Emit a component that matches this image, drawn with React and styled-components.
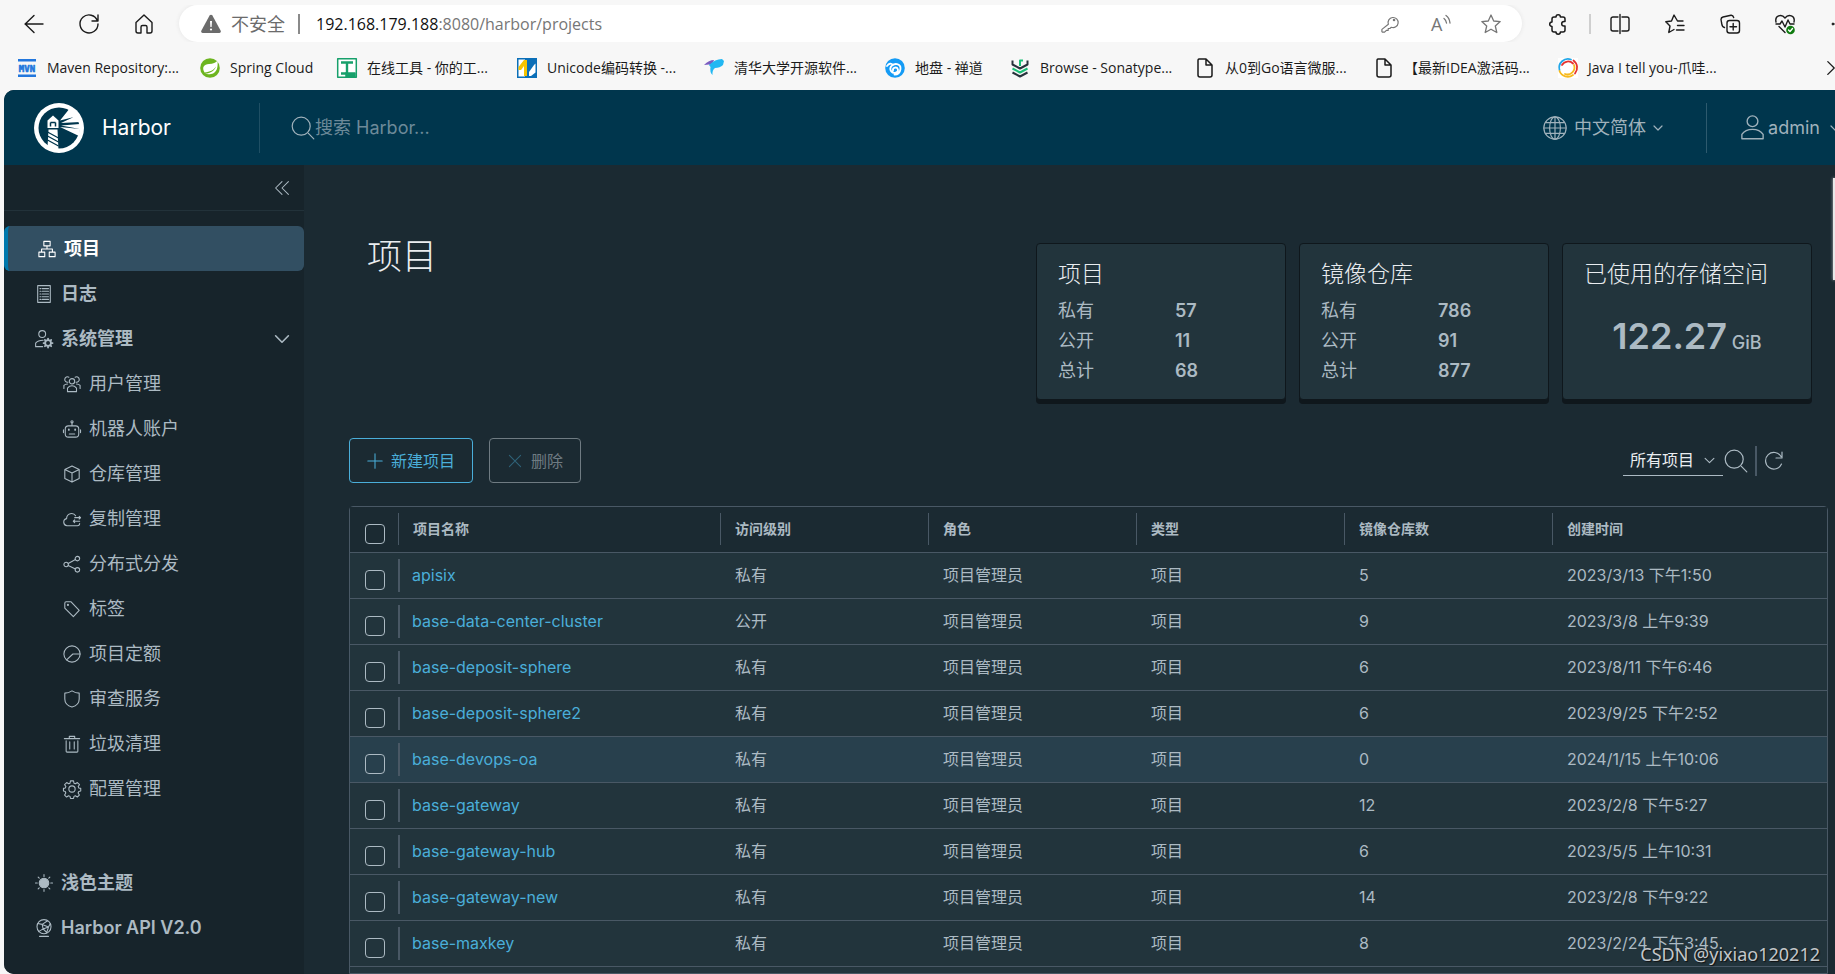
import styled, { createGlobalStyle } from 'styled-components';

const GlobalStyle = createGlobalStyle`
  * {
    box-sizing: border-box;
  }

  body {
    margin: 0;
    background: #f7f7f7;
    font-family: Inter, 'Noto Sans CJK SC', sans-serif;
    line-height: 24px;
  }

  button, input, select {
    font-family: inherit;
    line-height: inherit;
    margin: 0;
  }
`;

/* ---------- shared ---------- */

const Svg = styled.svg`
  display: block;
  flex: none;
  overflow: visible;
  fill: none;
  stroke: currentColor;
  stroke-width: ${({ $stroke }) => $stroke || 1};
  stroke-linecap: round;
  stroke-linejoin: round;
`;

const Icon = ({ name, size = 20, stroke }) => (
  <Svg width={size} height={size} viewBox="0 0 20 20" $stroke={stroke} aria-hidden="true">
    {icons[name]}
  </Svg>
);

const icons = {
  back: <path d="M19 10H1M10 1.5 1.2 10l8.800 8.500" />,
  reload: <path d="M18.500 7A9 9 0 1 0 19 10M19 1v6h-6" />,
  home: <path d="M2 8.500 10 1l8 7.500V17a2 2 0 0 1-2 2h-3v-6a1.500 1.500 0 0 0-1.500-1.500h-3A1.500 1.500 0 0 0 7 13v6H4a2 2 0 0 1-2-2z" />,
  warning: (
    <g stroke="none">
      <path d="M8.600 1.500a1.600 1.600 0 0 1 2.800 0l8.300 15.200a1.600 1.600 0 0 1-1.400 2.300H1.700a1.600 1.600 0 0 1-1.400-2.300z" fill="currentColor" />
      <path d="M9 7h2l-.4 6H9.400z" fill="#fff" />
      <circle cx="10" cy="15.500" r="1.100" fill="#fff" />
    </g>
  ),
  key: (
    <>
      <path d="M8.200 10.300a5.600 5.600 0 1 1 3.300 3.300L9.800 15H8v2H6l-2 2H1.500L1 18.500V16z" />
      <circle cx="14.500" cy="5.500" r=".8" />
    </>
  ),
  readAloud: (
    <>
      <text x="0" y="17" fontSize="18" fill="currentColor" stroke="none">A</text>
      <path d="M13 4.500q2 1.500 2.500 4.500M15 1.500q3.500 2.500 4 7.500" />
    </>
  ),
  star: <path d="m10 1 2.700 6 6.500.600-4.900 4.400 1.500 6.500L10 15.200l-5.800 3.300L5.700 12 .8 7.600l6.500-.6z" />,
  puzzle: <path d="M6 3h2a2.200 2.200 0 0 1 4.400 0H15a2 2 0 0 1 2 2v2.500h-1a2.300 2.300 0 0 0 0 4.600h1V16a2 2 0 0 1-2 2h-2.600a2.200 2.200 0 0 1-4.400 0H6a2 2 0 0 1-2-2v-3.500a2.300 2.300 0 0 1 0-4.600V5a2 2 0 0 1 2-2z" />,
  split: <path d="M8 3H3a2 2 0 0 0-2 2v10a2 2 0 0 0 2 2h5M12 3h5a2 2 0 0 1 2 2v10a2 2 0 0 1-2 2h-5M10 .5v19" />,
  favorites: <path d="M18 7h-5.500L9 1 6.500 7 .8 7.800 5 12l-1.200 6.500L9 15.500M12.500 11.500H19M11.500 16H19" />,
  collections: (
    <>
      <rect x="7" y="6.500" width="12.500" height="12.500" rx="2.500" />
      <path d="M4.500 13.500C2 13 2 11 1.600 9L1 5.500Q1 3.500 3 3l8-1.800q2-.2 2.700 2.300M13.200 9.500v6.500M10 12.800h6.500" />
    </>
  ),
  health: (
    <>
      <path d="M1 8C-.5 1.500 6.500-.5 10 4c3.500-4.500 10.500-2.500 9 4M1 10h4l2-3 3 6 3-7 2 4h4M4 12.500l6 6" />
      <circle cx="15.500" cy="16" r="4.300" fill="#0f7b0f" stroke="none" />
      <path d="m13.500 16 1.500 1.500 2.500-3" stroke="#fff" />
    </>
  ),
  doc: <path d="M4 1h7l6 6v10a2 2 0 0 1-2 2H5a2 2 0 0 1-2-2V2.500A1.500 1.500 0 0 1 4 1zM11 1v6h6" />,
  right: <path d="m6 2 8 8-8 8" />,
  search: (
    <>
      <circle cx="8.500" cy="8.500" r="7.500" />
      <path d="m14.500 14.500 4.500 4.500" />
    </>
  ),
  globe: (
    <>
      <circle cx="10" cy="10" r="9.300" />
      <ellipse cx="10" cy="10" rx="4.500" ry="9.300" />
      <path d="M10 .7v18.600M.7 10h18.600M2.500 5.500h15M2.500 14.500h15" />
    </>
  ),
  user: (
    <>
      <circle cx="10" cy="5" r="4.300" />
      <path d="M1.500 19v-3.500C3.500 12.500 7 11.500 10 11.500s6.500 1 8.500 4V19z" />
    </>
  ),
  down: <path d="m2 6 8 8 8-8" />,
  collapse: <path d="m10 2-8 8 8 8M18 2l-8 8 8 8" />,
  refresh: <path d="M17.500 13A8.300 8.300 0 1 1 17 5.500M18 1v6h-6" />,
  plus: <path d="M10 1v18M1 10h18" />,
  times: <path d="m3 3 14 14M17 3 3 17" />,
  projects: <path d="M6.500 1.500h7v5h-7zM1 13.500h6.500v5H1zM12.500 13.500H19v5h-6.500zM10 6.500V10M4 13v-3h12v3" />,
  logs: <path d="M3 .7h14v18.600H3zM5.500 4h1M8 4h7M5.500 7h1M8 7h7M5.500 10h1M8 10h7M5.500 13h1M8 13h7M5.500 16h1M8 16h7" />,
  admin: (
    <>
      <circle cx="8" cy="4.500" r="3.800" />
      <path d="M8.500 18.500H.7v-4c2-2.500 5-3.200 8.300-3.200" />
      <circle cx="14.500" cy="14.500" r="3.200" strokeWidth="2" />
      <path d="M14.500 9.500v1M14.500 18.500v1M9.500 14.500h1M18.500 14.500h1M11 11l.7.7M17.300 17.300l.7.7M18 11l-.7.700M11 18l.7-.700" strokeWidth="2" />
    </>
  ),
  users: (
    <>
      <circle cx="10" cy="7" r="3" />
      <path d="M5 18.500v-4q2-2.500 5-2.500t5 2.500v4zM5.500 8a3 3 0 1 1 1-5.500M14.500 8a3 3 0 1 0-1-5.500M1 15v-3.500Q2.500 10 5 10M19 15v-3.500Q17.500 10 15 10" />
    </>
  ),
  robot: (
    <>
      <rect x="2.500" y="6.500" width="15" height="12.500" rx="3.500" />
      <path d="M10 6V3M.5 11v3M19.500 11v3M7 15.500h6" />
      <circle cx="10" cy="2" r="1.200" />
      <path d="M6.500 10.500v.5M13.500 10.500v.5" strokeWidth="2" />
    </>
  ),
  box: <path d="m10 1 8 4v10l-8 4-8-4V5zM2 5l8 4 8-4M10 9v10" />,
  cloud: <path d="M18.500 15a2.500 2.500 0 0 1-2.500 2.500H4.500a4 4 0 0 1-.5-7.900C4 3.500 11.500 2 14 6.500M13 8.500h6.500M18 7l1.500 1.500L18 10M18.500 12.500h-7M13 11l-1.500 1.500L13 14" />,
  share: (
    <>
      <circle cx="3.500" cy="10.500" r="2.500" />
      <circle cx="16" cy="4" r="2.500" />
      <circle cx="16" cy="16.500" r="2.500" />
      <path d="m5.800 9.400 8-4.300M5.800 11.600l8 3.900" />
    </>
  ),
  tag: (
    <>
      <path d="M2 3.500A1.500 1.500 0 0 1 3.500 2H9l9 9.500-6.500 7L2 9z" />
      <circle cx="5.500" cy="5.500" r=".6" />
    </>
  ),
  quota: (
    <>
      <circle cx="10" cy="10" r="9" />
      <path d="M19 10h-8l-7 6.500" />
    </>
  ),
  shield: <path d="M10 1q4 2.500 8 2.500V10c0 5-4.500 8-8 9-3.500-1-8-4-8-9V3.500Q6 3.500 10 1z" />,
  trash: <path d="M1.500 4h17M7 4V1.500h6V4M3.500 6.500V18q0 1 1 1h11q1 0 1-1V6.500M7.500 7.500v8M12.500 7.500v8" />,
  cog: (
    <>
      <circle cx="10" cy="10" r="3.500" />
      <path d="m8.300 1h3.400l.5 2.500 1.600.7 2.200-1.400 2.300 2.300-1.400 2.200.7 1.500 2.100.5v2.900l-2.200.6-.7 1.600 1.400 2.300-2.300 2.200-2.200-1.400-1.500.7-.5 2.300H8.300l-.5-2.300-1.600-.7-2.200 1.400-2.200-2.200 1.300-2.300-.6-1.600L.5 12.200V9.300l2-.5.7-1.500-1.400-2.200 2.300-2.300 2.200 1.400 1.500-.7z" />
    </>
  ),
  sun: (
    <>
      <circle cx="10" cy="10" r="5.300" fill="currentColor" />
      <path d="M10 .7v2M10 17.300v2M.5 10h2M17.500 10h2M3.500 3.500l1.200 1.200M15.300 15.300l1.200 1.200M16.500 3.500l-1.200 1.200M4.700 15.300l-1.200 1.200" />
    </>
  ),
  api: (
    <>
      <circle cx="10" cy="8.500" r="7.800" />
      <path d="M5 19.300h10M3 5l5 1 6-4M8 6l1 5-5 3M9 11l6-2 2-4M15 9l-2 6-4-4M8 6l7 3" />
    </>
  ),
};

/* ---------- browser chrome ---------- */

const Shell = styled.div`
  display: flex;
  flex-direction: column;
  height: 100vh;
  overflow: hidden;
`;

const Chrome = styled.div`
  flex: none;
  height: 90px;
  padding-top: 5px;
  color: #1b1b1b;
  font-family: 'Open Sans', 'Noto Sans CJK SC', sans-serif;
`;

const ToolBar = styled.div`
  display: flex;
  align-items: center;
  height: 37px;
  padding-left: 24px;
  overflow: hidden;
`;

const ToolButton = styled.button`
  flex: none;
  width: 20px;
  padding: 0;
  border: 0;
  background: none;
  color: ${({ $muted }) => ($muted ? '#767676' : '#1b1b1b')};
`;

const NavButtons = styled.div`
  display: flex;
  gap: 35px;
`;

const AddressBar = styled.div`
  flex: 1;
  display: flex;
  align-items: center;
  height: 37px;
  margin-left: 25px;
  padding: 0 21px 0 22px;
  border-radius: 19px;
  background: #fff;
  box-shadow: 0 0 4px #e4e4e4;
  color: #6b6b6b;
  font-size: 16px;
`;

const Security = styled.span`
  margin-left: 10px;
  padding-right: 13px;
  border-right: 2px solid #8a8a8a;
  font-size: 18px;
  line-height: 20px;
`;

const Url = styled.span`
  flex: 1;
  margin-left: 16px;
  color: #767676;

  & > b {
    color: #111;
    font-weight: 400;
  }
`;

const AddressTools = styled.div`
  display: flex;
  gap: 30px;
`;

const Extensions = styled.div`
  display: flex;
  align-items: center;
  gap: 35px;
  margin: 0 -15px 0 26px;
`;

const ExtensionStart = styled.div`
  display: flex;
  align-items: center;
  gap: 21px;
  margin-right: -16px;

  &::after {
    content: '';
    width: 2px;
    height: 20px;
    background: #cfcfcf;
  }
`;

const BookmarkBar = styled.nav`
  display: flex;
  align-items: center;
  height: 52px;
  padding-left: 17px;
  overflow: hidden;
`;

const Bookmark = styled.a`
  flex: none;
  display: flex;
  align-items: center;
  gap: 10px;
  width: ${({ $width }) => $width}px;
  color: #1b1b1b;
  font-size: 14px;
  white-space: nowrap;
  text-decoration: none;
`;

const MoreBookmarks = styled(ToolButton)`
  margin: 0 -8px 0 auto;
`;

const favicons = {
  mvn: (
    <g stroke="none" fill="#2277dd">
      <path d="M1 1h18v2.500H1zM1 16.500h18V19H1z" />
      <text x="10" y="14" fontSize="9" fontWeight="700" textAnchor="middle" fontFamily="DejaVu Sans Mono" stroke="#2277dd" strokeWidth=".6">MVN</text>
    </g>
  ),
  spring: (
    <g stroke="none">
      <circle cx="10" cy="10" r="9.800" fill="#6db51f" />
      <path d="M17.500 2.500c.5 6 0 12.500-6.500 13.500-2 .3-4 .3-6-.2 6-.6 9.500-3 11-7.300-2.500 4-6 5.200-11.500 6C1.500 9 4 6.500 9 6c4-.4 7-1 8.500-3.500z" fill="#fff" />
    </g>
  ),
  tool: (
    <g stroke="#17a06b">
      <path d="M.7.700h18.600v18.600H.7z" fill="#fff" />
      <path d="M4 4.500h12M10 4.500v11M4 15.500h6" strokeWidth="2.400" strokeLinecap="butt" />
      <path d="M9 15h9v4H9z" fill="#17a06b" />
    </g>
  ),
  unicode: (
    <g stroke="none">
      <path d="M0 0h20v20H0z" fill="#0b6fb8" />
      <path d="M1.500 1.500H8v17H1.500z" fill="#fff" />
      <path d="M1.500 9 7 2h3v16H7V8l-3 4H1.500z" fill="#f7c400" />
      <path d="m12 14 5-7 1.500-1.500v9L14 18h-2z" fill="#fff" />
    </g>
  ),
  bird: (
    <g stroke="none">
      <path d="M0 7q5-5 10-5-1 4-5 5 3 0 5-1z" fill="#7a5cc0" />
      <path d="M5 7q6-6 13-6l2 2-1 4q-3 3-8 3-3 2-2.500 7-3-3-2-8z" fill="#22b7f2" />
    </g>
  ),
  zentao: (
    <g>
      <circle cx="10" cy="10" r="9.800" fill="#149bf5" stroke="none" />
      <path d="M2 8q3-4 6-1M8 12.500a2.500 2.500 0 1 1 3 2c-4 1.500-7-2.500-5-6 3-4 10-3 9.500 2.500-.5 3.500-3 5.500-6 5.500" stroke="#fff" strokeWidth="1.800" />
    </g>
  ),
  sonatype: (
    <g strokeWidth="2" strokeLinecap="butt">
      <path d="M10 8V2.500h3" stroke="#1bbf78" />
      <path d="M2.500 2.500v4l7.500 4 7.500-4v-4M2.500 14.500l7.500 4 7.500-4" stroke="#28323c" />
      <path d="m2.500 10.500 7.500 4 7.500-4" stroke="#1bbf78" />
    </g>
  ),
  java: (
    <g strokeWidth="1.800">
      <path d="M0 0h20v20H0z" fill="#fff" stroke="none" />
      <path d="M1.500 12A8.800 8.800 0 0 1 13 1.500" stroke="#22a7e8" />
      <path d="M4 7a7 7 0 0 1 11-1.500M15.500 2.500a9 9 0 0 1 1.500 13" stroke="#e5322d" />
      <path d="M15 17A8.800 8.800 0 0 1 1.500 13M16 7a7 7 0 0 1-9 9" stroke="#f7b91c" />
    </g>
  ),
  doc: icons.doc,
};

const bookmarks = [
  { icon: 'mvn', text: 'Maven Repository:...', width: 183 },
  { icon: 'spring', text: 'Spring Cloud', width: 137 },
  { icon: 'tool', text: '在线工具 - 你的工...', width: 180 },
  { icon: 'unicode', text: 'Unicode编码转换 -...', width: 187 },
  { icon: 'bird', text: '清华大学开源软件...', width: 181 },
  { icon: 'zentao', text: '地盘 - 禅道', width: 125 },
  { icon: 'sonatype', text: 'Browse - Sonatype...', width: 185 },
  { icon: 'doc', text: '从0到Go语言微服...', width: 179 },
  { icon: 'doc', text: '【最新IDEA激活码...', width: 184 },
  { icon: 'java', text: 'Java I tell you-爪哇...', width: 180 },
];

const BrowserChrome = () => (
  <Chrome>
    <ToolBar>
      <NavButtons>
        <ToolButton aria-label="后退"><Icon name="back" stroke={1.4} /></ToolButton>
        <ToolButton aria-label="刷新"><Icon name="reload" stroke={1.4} /></ToolButton>
        <ToolButton aria-label="主页"><Icon name="home" stroke={1.4} /></ToolButton>
      </NavButtons>
      <AddressBar>
        <Icon name="warning" />
        <Security>不安全</Security>
        <Url><b>192.168.179.188</b>:8080/harbor/projects</Url>
        <AddressTools>
          <ToolButton $muted aria-label="密码"><Icon name="key" size={18} stroke={1.3} /></ToolButton>
          <ToolButton $muted aria-label="大声朗读"><Icon name="readAloud" stroke={1.3} /></ToolButton>
          <ToolButton $muted aria-label="收藏"><Icon name="star" stroke={1.3} /></ToolButton>
        </AddressTools>
      </AddressBar>
      <Extensions>
        <ExtensionStart>
          <ToolButton aria-label="扩展"><Icon name="puzzle" stroke={1.5} /></ToolButton>
        </ExtensionStart>
        <ToolButton aria-label="分屏"><Icon name="split" stroke={1.4} /></ToolButton>
        <ToolButton aria-label="收藏夹"><Icon name="favorites" stroke={1.4} /></ToolButton>
        <ToolButton aria-label="集锦"><Icon name="collections" stroke={1.4} /></ToolButton>
        <ToolButton aria-label="浏览器概要"><Icon name="health" stroke={1.4} /></ToolButton>
        <ToolButton aria-label="更多">
          <Svg width="20" height="20" viewBox="0 0 20 20">
            <circle cx="3" cy="10" r="1" fill="currentColor" />
            <circle cx="10" cy="10" r="1" fill="currentColor" />
          </Svg>
        </ToolButton>
      </Extensions>
    </ToolBar>
    <BookmarkBar>
      {bookmarks.map(({ icon, text, width }) => (
        <Bookmark key={text} href="#" $width={width}>
          <Svg width="20" height="20" viewBox="0 0 20 20" $stroke={1.5}>{favicons[icon]}</Svg>
          {text}
        </Bookmark>
      ))}
      <MoreBookmarks aria-label="更多书签"><Icon name="right" size={16} stroke={1.6} /></MoreBookmarks>
    </BookmarkBar>
  </Chrome>
);

/* ---------- harbor header ---------- */

const Portal = styled.div`
  flex: 1;
  min-height: 0;
  display: flex;
  flex-direction: column;
  margin-left: 4px;
  border-radius: 10px 0 0 10px;
  overflow: hidden;
  background: #1b2a32;
  color: #acbac3;
`;

const Header = styled.header`
  flex: none;
  display: flex;
  align-items: center;
  height: 75px;
  background: #00364d;
  overflow: hidden;
`;

const Brand = styled.a`
  display: flex;
  align-items: center;
  gap: 18px;
  width: 255px;
  padding-left: 30px;
  color: #fff;
  font-size: 21px;
  text-decoration: none;
`;

const Search = styled.label`
  flex: 1;
  display: flex;
  align-items: center;
  height: 50px;
  padding-left: 31px;
  border-left: 1px solid #1f4f64;
  color: #9fb1bb;
`;

const SearchInput = styled.input`
  flex: 1;
  padding: 0;
  border: 0;
  outline: 0;
  background: none;
  color: #fff;
  font-size: 18px;

  &::placeholder {
    color: #6d8a99;
  }
`;

const HeaderMenu = styled.button`
  flex: none;
  display: flex;
  align-items: center;
  height: 50px;
  padding: 0;
  border: 0;
  background: none;
  color: #9fb1bb;
  font-size: 18px;

  & > span {
    margin: ${({ $user }) => ($user ? '0 10px 0 3px' : '0 7px')};
  }
`;

const UserArea = styled.div`
  flex: none;
  margin: 0 -5px 0 43px;
  padding-left: 33px;
  border-left: 1px solid #2d5a6e;
`;

const Logo = () => (
  <svg width="50" height="50" viewBox="0 0 50 50" aria-hidden="true">
    <circle cx="25" cy="25" r="25" fill="#fff" />
    <circle cx="25" cy="25" r="20.500" fill="#00364d" />
    <path d="M26 17.500 36 5l8 8zM27 20l16-7.500 3 6.500zM27 22.500l19-1.500v5zM26 24l20 2-1 7z" fill="#fff" />
    <path d="m19 12.500 5.500 5v7.500h-11v-7.500z" fill="#fff" />
    <path d="M16.500 19.500v4M21.500 19.500v4M16.500 19.500h5" stroke="#00364d" strokeWidth="1.500" />
    <path d="M14.500 26.500h9l1 21.500-11-3z" fill="#fff" />
    <path d="m13.500 29 11 6M13.500 33l11 6M13.500 37l11 6" stroke="#00364d" strokeWidth="1.300" />
  </svg>
);

const HarborHeader = () => (
  <Header>
    <Brand href="#">
      <Logo />
      Harbor
    </Brand>
    <Search>
      <Icon name="search" size={24} />
      <SearchInput type="text" placeholder="搜索 Harbor..." aria-label="搜索 Harbor" />
    </Search>
    <HeaderMenu>
      <Icon name="globe" size={24} />
      <span>中文简体</span>
      <Icon name="down" size={10} stroke={2.4} />
    </HeaderMenu>
    <UserArea>
      <HeaderMenu $user>
        <Icon name="user" size={25} stroke={1.1} />
        <span>admin</span>
        <Icon name="down" size={10} stroke={2.4} />
      </HeaderMenu>
    </UserArea>
  </Header>
);

/* ---------- side nav ---------- */

const Body = styled.div`
  flex: 1;
  min-height: 0;
  display: flex;
`;

const SideNav = styled.nav`
  flex: none;
  width: 300px;
  background: #17242b;
`;

const Trigger = styled.div`
  display: flex;
  justify-content: flex-end;
  height: 46px;
  margin-bottom: 15px;
  padding: 15px 14px 0 0;
  border-bottom: 1px solid #22323a;
`;

const TriggerButton = styled.button`
  height: 16px;
  padding: 0;
  border: 0;
  background: none;
  color: #acbac3;
`;

const NavLink = styled.a`
  display: flex;
  align-items: center;
  gap: 8px;
  height: 45px;
  padding: 0 14px 0 ${({ $sub, $active }) => ($sub ? 59 : $active ? 30 : 31)}px;
  border-left: ${({ $active }) => ($active ? '4px solid #0079ad' : '0')};
  border-radius: 6px;
  background: ${({ $active }) => ($active ? '#324f62' : 'none')};
  color: ${({ $active }) => ($active ? '#fff' : '#acbac3')};
  font-size: 18px;
  font-weight: ${({ $sub }) => ($sub ? 400 : 600)};
  text-decoration: none;

  & > span {
    flex: 1;
  }
`;

const NavFooter = styled.div`
  margin-top: 49px;
`;

const links = [
  { icon: 'projects', text: '项目', active: true },
  { icon: 'logs', text: '日志' },
  { icon: 'admin', text: '系统管理', open: true },
  { icon: 'users', text: '用户管理', sub: true },
  { icon: 'robot', text: '机器人账户', sub: true },
  { icon: 'box', text: '仓库管理', sub: true },
  { icon: 'cloud', text: '复制管理', sub: true },
  { icon: 'share', text: '分布式分发', sub: true },
  { icon: 'tag', text: '标签', sub: true },
  { icon: 'quota', text: '项目定额', sub: true },
  { icon: 'shield', text: '审查服务', sub: true },
  { icon: 'trash', text: '垃圾清理', sub: true },
  { icon: 'cog', text: '配置管理', sub: true },
];

const Sidebar = () => (
  <SideNav>
    <Trigger>
      <TriggerButton aria-label="收起"><Icon name="collapse" size={16} stroke={1.3} /></TriggerButton>
    </Trigger>
    {links.map(({ icon, text, active, open, sub }) => (
      <NavLink key={text} href="#" $active={active} $sub={sub}>
        <Icon name={icon} size={18} stroke={1.2} />
        <span>{text}</span>
        {open && <Icon name="down" size={16} stroke={2} />}
      </NavLink>
    ))}
    <NavFooter>
      <NavLink href="#">
        <Icon name="sun" size={18} stroke={1.2} />
        <span>浅色主题</span>
      </NavLink>
      <NavLink href="#">
        <Icon name="api" size={18} stroke={1.2} />
        <span>Harbor API V2.0</span>
      </NavLink>
    </NavFooter>
  </SideNav>
);

/* ---------- projects page ---------- */

const Main = styled.main`
  position: relative;
  flex: 1;
  min-width: 0;
  display: flex;
  flex-direction: column;
  padding: 78px 7px 0 45px;
  overflow: hidden;
`;

const Overview = styled.div`
  flex: none;
  display: flex;
  gap: 13px;
  margin-right: 16px;
`;

const Title = styled.h1`
  flex: 1;
  margin: -12px 0 0 18px;
  color: #eaedf0;
  font-size: 35px;
  font-weight: 300;
  line-height: 50px;
`;

const Card = styled.section`
  width: 250px;
  margin-bottom: 4px;
  padding: 15px 21px 13px;
  border: 1px solid #0f171c;
  border-radius: 4px;
  background: #22343c;
  box-shadow: 0 4px 0 #0f171c;
`;

const CardTitle = styled.h2`
  margin: 0 0 7px;
  color: #eaedf0;
  font-size: 23px;
  font-weight: 300;
  line-height: 30px;
  white-space: nowrap;
`;

const Stats = styled.dl`
  display: grid;
  grid-template-columns: 117px 1fr;
  margin: 0;
  font-size: 18px;
  line-height: 30px;

  & > dd {
    margin: 0;
    font-weight: 600;
  }
`;

const Storage = styled.p`
  margin: 0;
  padding-top: 16px;
  text-align: center;
  font-size: 18px;
  font-weight: 500;
  line-height: 48px;

  & > strong {
    font-size: 36px;
    font-weight: 600;
  }
`;

const Actions = styled.div`
  flex: none;
  display: flex;
  align-items: center;
  gap: 16px;
  margin: 34px 0 23px;
`;

const ActionButton = styled.button`
  display: flex;
  align-items: center;
  gap: 8px;
  height: 45px;
  padding: 0 17px;
  border: 1px solid currentColor;
  border-radius: 4px;
  background: none;
  color: ${({ disabled }) => (disabled ? '#6f7b82' : '#4aaed9')};
  font-size: 16px;

  & > svg {
    color: ${({ disabled }) => (disabled ? '#2f6379' : '#4aaed9')};
  }
`;

const Filters = styled.div`
  display: flex;
  align-items: center;
  margin: 0 44px 0 auto;
`;

const SelectBox = styled.div`
  position: relative;
  width: 100px;
  margin-right: 1px;

  & > svg {
    position: absolute;
    top: 9px;
    right: 8px;
    pointer-events: none;
  }
`;

const Select = styled.select`
  display: block;
  width: 100%;
  height: 30px;
  padding: 0 0 0 7px;
  border: 0;
  border-bottom: 1px solid #acbac3;
  border-radius: 0;
  appearance: none;
  background: #1b2a32;
  color: #eaedf0;
  font-size: 16px;
`;

const FilterButton = styled.button`
  padding: 0;
  border: 0;
  background: none;
  color: #acbac3;
`;

const Separator = styled.span`
  width: 2px;
  height: 30px;
  margin: 0 7px;
  background: #495865;
`;

const GridBox = styled.div`
  flex: 1 0 auto;
  border: 1px solid #495865;
  border-radius: 4px 4px 0 0;
  background: #22343c;
`;

const Grid = styled.table`
  width: 100%;
  table-layout: fixed;
  border-spacing: 0;
  font-size: 16px;
`;

const Cell = styled.td`
  height: 46px;
  padding: 0 0 1px 15px;
  border-bottom: 1px solid #495865;
`;

const HeadCell = styled(Cell).attrs({ as: 'th', scope: 'col' })`
  background: linear-gradient(#495865, #495865) no-repeat 0 6px / 1px 32px #1b2a32;
  font-size: 14px;
  font-weight: 600;
  text-align: left;
`;

const NameCell = styled(Cell)`
  padding-left: 14px;
  background: linear-gradient(#495865, #495865) no-repeat 0 6px / 2px 33px;
`;

const CheckCell = styled(Cell)`
  padding: 9px 0 0 15px;
  background: ${({ $head }) => ($head ? '#1b2a32' : 'none')};
`;

const Row = styled.tr`
  background: ${({ $hover }) => ($hover ? '#28404d' : 'none')};
`;

const Checkbox = styled.input.attrs({ type: 'checkbox' })`
  display: block;
  width: 20px;
  height: 20px;
  border: 1px solid #acbac3;
  border-radius: 4px;
  appearance: none;
`;

const ProjectLink = styled.a`
  color: #4aaed9;
  text-decoration: none;
`;

const ScrollThumb = styled.div`
  position: absolute;
  top: 13px;
  right: 0;
  width: 2px;
  height: 102px;
  background: #e8e8e8;
  box-shadow: 0 0 3px #c8c8c8;
`;

const Watermark = styled.div`
  position: absolute;
  right: 15px;
  bottom: 8px;
  color: #c3c7ca;
  font-family: 'Noto Sans', sans-serif;
  font-size: 18px;
  line-height: 24px;
  text-shadow: 1px 1px 1px #111;
`;

const projects = [
  { name: 'apisix', access: '私有', repos: 5, created: '2023/3/13 下午1:50' },
  { name: 'base-data-center-cluster', access: '公开', repos: 9, created: '2023/3/8 上午9:39' },
  { name: 'base-deposit-sphere', access: '私有', repos: 6, created: '2023/8/11 下午6:46' },
  { name: 'base-deposit-sphere2', access: '私有', repos: 6, created: '2023/9/25 下午2:52' },
  { name: 'base-devops-oa', access: '私有', repos: 0, created: '2024/1/15 上午10:06', hover: true },
  { name: 'base-gateway', access: '私有', repos: 12, created: '2023/2/8 下午5:27' },
  { name: 'base-gateway-hub', access: '私有', repos: 6, created: '2023/5/5 上午10:31' },
  { name: 'base-gateway-new', access: '私有', repos: 14, created: '2023/2/8 下午9:22' },
  { name: 'base-maxkey', access: '私有', repos: 8, created: '2023/2/24 下午3:45' },
];

const StatCard = ({ title, values }) => (
  <Card>
    <CardTitle>{title}</CardTitle>
    <Stats>
      <dt>私有</dt>
      <dd>{values[0]}</dd>
      <dt>公开</dt>
      <dd>{values[1]}</dd>
      <dt>总计</dt>
      <dd>{values[2]}</dd>
    </Stats>
  </Card>
);

const ProjectTable = () => (
  <GridBox>
    <Grid>
      <colgroup>
        <col width="48" />
        <col width="322" />
        <col width="208" />
        <col width="208" />
        <col width="208" />
        <col width="208" />
        <col />
      </colgroup>
      <thead>
        <tr>
          <CheckCell $head><Checkbox aria-label="全选" /></CheckCell>
          <HeadCell>项目名称</HeadCell>
          <HeadCell>访问级别</HeadCell>
          <HeadCell>角色</HeadCell>
          <HeadCell>类型</HeadCell>
          <HeadCell>镜像仓库数</HeadCell>
          <HeadCell>创建时间</HeadCell>
        </tr>
      </thead>
      <tbody>
        {projects.map(({ name, access, repos, created, hover }) => (
          <Row key={name} $hover={hover}>
            <CheckCell><Checkbox aria-label={name} /></CheckCell>
            <NameCell><ProjectLink href="#">{name}</ProjectLink></NameCell>
            <Cell>{access}</Cell>
            <Cell>项目管理员</Cell>
            <Cell>项目</Cell>
            <Cell>{repos}</Cell>
            <Cell>{created}</Cell>
          </Row>
        ))}
      </tbody>
    </Grid>
  </GridBox>
);

const ProjectsPage = () => (
  <Main>
    <Overview>
      <Title>项目</Title>
      <StatCard title="项目" values={[57, 11, 68]} />
      <StatCard title="镜像仓库" values={[786, 91, 877]} />
      <Card>
        <CardTitle>已使用的存储空间</CardTitle>
        <Storage><strong>122.27</strong> GiB</Storage>
      </Card>
    </Overview>
    <Actions>
      <ActionButton><Icon name="plus" size={16} stroke={1.3} />新建项目</ActionButton>
      <ActionButton disabled><Icon name="times" size={16} stroke={1.3} />删除</ActionButton>
      <Filters>
        <SelectBox>
          <Select aria-label="项目范围" defaultValue="all">
            <option value="all">所有项目</option>
          </Select>
          <Icon name="down" size={11} stroke={2} />
        </SelectBox>
        <FilterButton aria-label="搜索"><Icon name="search" size={24} /></FilterButton>
        <Separator />
        <FilterButton aria-label="刷新列表"><Icon name="refresh" stroke={1.2} /></FilterButton>
      </Filters>
    </Actions>
    <ProjectTable />
    <ScrollThumb />
    <Watermark>CSDN @yixiao120212</Watermark>
  </Main>
);

const App = () => (
  <Shell>
    <GlobalStyle />
    <BrowserChrome />
    <Portal>
      <HarborHeader />
      <Body>
        <Sidebar />
        <ProjectsPage />
      </Body>
    </Portal>
  </Shell>
);

export default App;
